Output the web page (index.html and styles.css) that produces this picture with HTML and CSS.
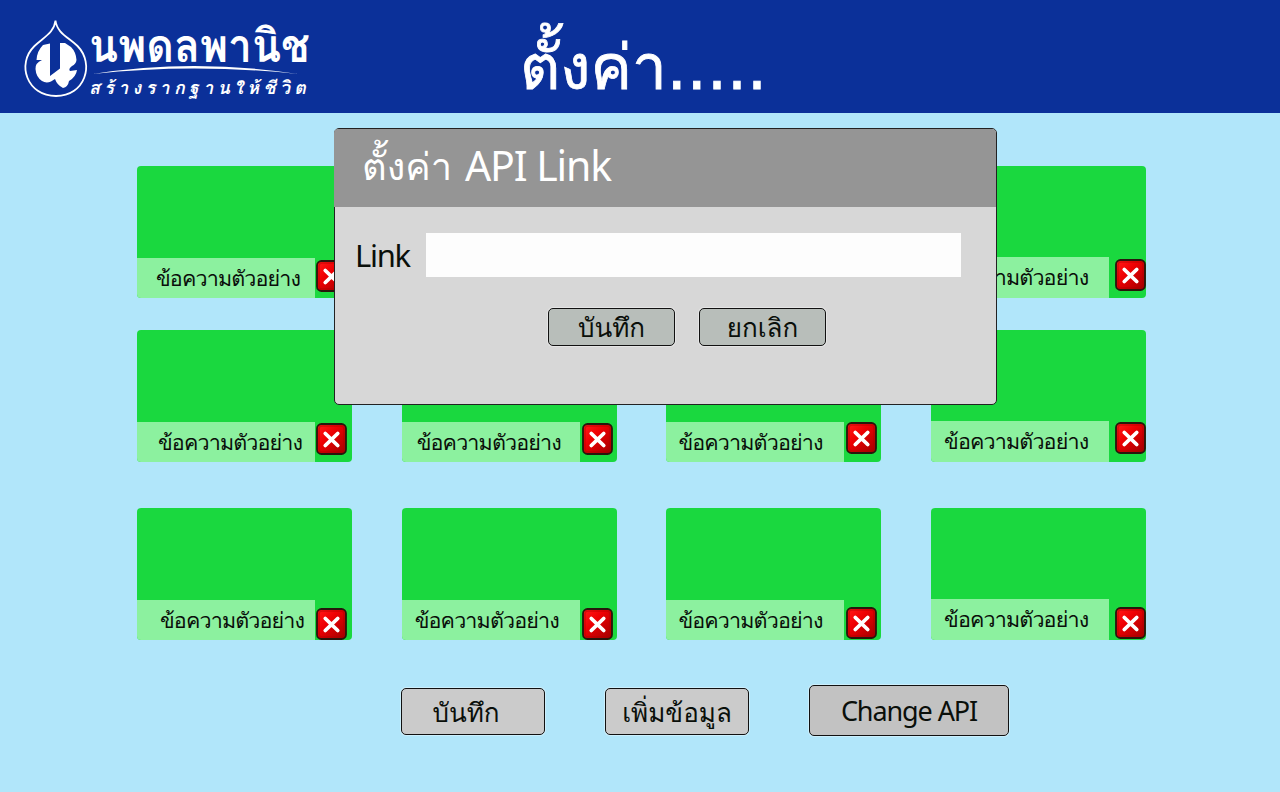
FILE: index.html
```html
<!DOCTYPE html>
<html lang="th">
<head>
<meta charset="utf-8">
<title>ตั้งค่า</title>
<link rel="stylesheet" href="styles.css">
</head>
<body>
<svg class="defs" width="0" height="0" aria-hidden="true">
  <defs>
    <linearGradient id="red" x1="0" y1="0" x2="1" y2="1"><stop offset="0.1" stop-color="#ff1414"/><stop offset="0.4" stop-color="#ee0003"/><stop offset="1" stop-color="#9d0000"/></linearGradient>
    <symbol id="close" viewBox="0 0 31 32">
      <rect x="1" y="1" width="29" height="30" rx="4.5" fill="url(#red)" stroke="#28160c" stroke-width="1.8"/>
      <rect x="3" y="3" width="25" height="26" rx="3" fill="none" stroke="#a80000" stroke-opacity=".45" stroke-width="1.5"/>
      <path d="M9.300 10.500 21.700 22.500M21.700 10.500 9.300 22.500" stroke="#fff" stroke-width="3.8" stroke-linecap="round"/>
    </symbol>
  </defs>
</svg>
<header class="topbar">
  <svg class="logo" viewBox="0 0 320 113" width="320" height="113">
    <path d="M55.500 20.500C54 33 44 37 34.500 46C16 64 27 96 56 96C85 96 95 64 77.500 46C68 37 57 33 55.500 20.500Z" fill="none" stroke="#fff" stroke-width="1.800"/>
    <path d="M50 43.500L43 45Q37 51 36.500 60H42Q35 63 35.500 69Q36 77 42 81Q46 83.500 51 81.500L55 79Q57 85 63 88Q68 87 69 81Q76 77 77 70L70 71Q68 69 72 66Q76 64 76.500 60Q76 52 71 47L65 43H60V68.500L50 76Z" fill="#fff"/>
    <text class="logo-name" x="89" y="62" textLength="221" lengthAdjust="spacingAndGlyphs">นพดลพานิช</text>
    <path d="M93 74Q193 58 298 74Q193 63 93 74Z" fill="#fff"/>
    <text class="logo-tag" transform="translate(89 94) skewX(-12)" textLength="217">สร้างรากฐานให้ชีวิต</text>
  </svg>
  <h1 class="title">ตั้งค่า<span class="dots">.....</span></h1>
</header>
<main class="board">
  <section class="cards">
    <article class="card c1 r1"><span class="label">ข้อความตัวอย่าง</span><svg class="x"><use href="#close"/></svg></article>
    <article class="card c2 r1"><span class="label">ข้อความตัวอย่าง</span><svg class="x"><use href="#close"/></svg></article>
    <article class="card c3 r1"><span class="label">ข้อความตัวอย่าง</span><svg class="x"><use href="#close"/></svg></article>
    <article class="card c4 r1"><span class="label">ข้อความตัวอย่าง</span><svg class="x"><use href="#close"/></svg></article>
    <article class="card c1 r2"><span class="label">ข้อความตัวอย่าง</span><svg class="x"><use href="#close"/></svg></article>
    <article class="card c2 r2"><span class="label">ข้อความตัวอย่าง</span><svg class="x"><use href="#close"/></svg></article>
    <article class="card c3 r2"><span class="label">ข้อความตัวอย่าง</span><svg class="x"><use href="#close"/></svg></article>
    <article class="card c4 r2"><span class="label">ข้อความตัวอย่าง</span><svg class="x"><use href="#close"/></svg></article>
    <article class="card c1 r3"><span class="label">ข้อความตัวอย่าง</span><svg class="x"><use href="#close"/></svg></article>
    <article class="card c2 r3"><span class="label">ข้อความตัวอย่าง</span><svg class="x"><use href="#close"/></svg></article>
    <article class="card c3 r3"><span class="label">ข้อความตัวอย่าง</span><svg class="x"><use href="#close"/></svg></article>
    <article class="card c4 r3"><span class="label">ข้อความตัวอย่าง</span><svg class="x"><use href="#close"/></svg></article>
  </section>
  <nav class="actions">
    <button class="btn save">บันทึก</button>
    <button class="btn add">เพิ่มข้อมูล</button>
    <button class="btn api">Change API</button>
  </nav>
</main>
<div class="modal" role="dialog">
  <div class="modal-head"><span class="mt-th">ตั้งค่า</span><span class="mt-en">API Link</span></div>
  <div class="field"><label for="link">Link</label><input id="link" type="text"></div>
  <div class="modal-actions">
    <button class="btn small">บันทึก</button>
    <button class="btn small">ยกเลิก</button>
  </div>
</div>
</body>
</html>
```

FILE: styles.css
```css
* { box-sizing: border-box; }
body {
  margin: 0; width: 1280px; height: 792px; overflow: hidden; position: relative;
  background: #b1e6fa; color: #0a0f0a;
  font-family: "Noto Sans", Loma, Tahoma, sans-serif;
}
.defs { position: absolute; }
.topbar { height: 113px; background: #0b3099; display: flex; color: #fff; }
.logo { flex: none; display: block; overflow: visible; }
.logo-name { font-family: Loma, sans-serif; font-size: 46px; font-weight: 700; fill: #fff; }
.logo-tag { font-family: Loma, sans-serif; font-size: 18px; font-weight: 700; fill: #fff; }
.title { margin: 0 0 0 200px; font-size: 62px; line-height: 90px; padding-top: 20px; font-weight: 400; white-space: nowrap; -webkit-text-stroke: 0.8px #fff; }
.dots { font-family: "DejaVu Sans", sans-serif; font-size: 63px; line-height: 1; }
.board { padding: 53px 134px 0 137px; }
.cards {
  display: grid; grid-template-columns: 215px 215px 215px 215px;
  column-gap: 49.700px; grid-template-rows: 164px 178px 132px;
}
.card {
  height: 132px; background: #1ad83f; border-radius: 4px; overflow: hidden;
  display: flex; align-items: flex-end; --tx: 13px; --xb: 7px;
}
.label {
  width: 178px; height: 40px; background: #8cf19f; flex: none;
  padding-left: var(--tx); font-size: 21.500px; letter-spacing: -0.850px; line-height: 39px; white-space: nowrap;
}
.x { width: 31px; height: 32px; flex: none; margin: 0 0 var(--xb) 0.500px; }
.c2 .x { margin-left: 2.500px; }
.c3 .x { margin-left: 2px; }
.c4 .x { margin-left: 6px; }
.c4 .label { height: 41px; }
.c1 { --tx: 19px; }
.c3 { --tx: 12px; }
.c1.r2 { --tx: 21px; }
.c1.r3 { --tx: 23px; }
.c2.r2 { --tx: 15px; }
.c1.r1 { --xb: 6px; }
.c3.r2, .c4.r2 { --xb: 8px; }
.r3 { --xb: 0px; }
.c3.r3, .c4.r3 { --xb: 1px; }
.actions { display: flex; align-items: center; padding: 45px 0 0 264px; gap: 60px; }
.btn {
  border: 1.500px solid #111; border-radius: 5px; background: #cbcbcb; color: #0a0f0a;
  font: 26px "Noto Sans", Loma, Tahoma, sans-serif; padding: 0;
  height: 47px; width: 144px; white-space: nowrap; line-height: 44px;
  box-shadow: 0 0 0 1px rgba(255,255,255,.35);
}
.save, .add { margin-top: 2px; }
.save { padding-right: 14px; }
.api { width: 200px; height: 51px; background: #c2c2c2; font-size: 27px; letter-spacing: -1.1px; }
.modal {
  position: absolute; left: 334px; top: 128px; width: 663px; height: 277px;
  background: #d7d7d7; border: 1.500px solid #222; border-radius: 5px;
}
.modal-head {
  margin: 0 0 0 -1px; height: 78px; background: #959595; border-radius: 4px 4px 0 0;
  color: #fff; display: flex; gap: 13px; padding-left: 28px; font-size: 41px; line-height: 73px; white-space: nowrap;
}
.mt-th { font-size: 38px; }
.mt-en { letter-spacing: -1.100px; }
.field { display: flex; align-items: center; height: 44px; margin-top: 26px; padding-left: 20px; }
.field label { width: 71px; font-size: 31px; letter-spacing: -1.300px; line-height: 44px; }
.field input { width: 535px; height: 44px; border: 0; background: #fdfdfd; padding: 0 8px; font: 24px "Noto Sans", sans-serif; }
.modal-actions { display: flex; gap: 24px; margin: 31px 0 0 213px; }
.small { width: 127px; height: 38px; background: #b8beba; line-height: 35px; }
```
